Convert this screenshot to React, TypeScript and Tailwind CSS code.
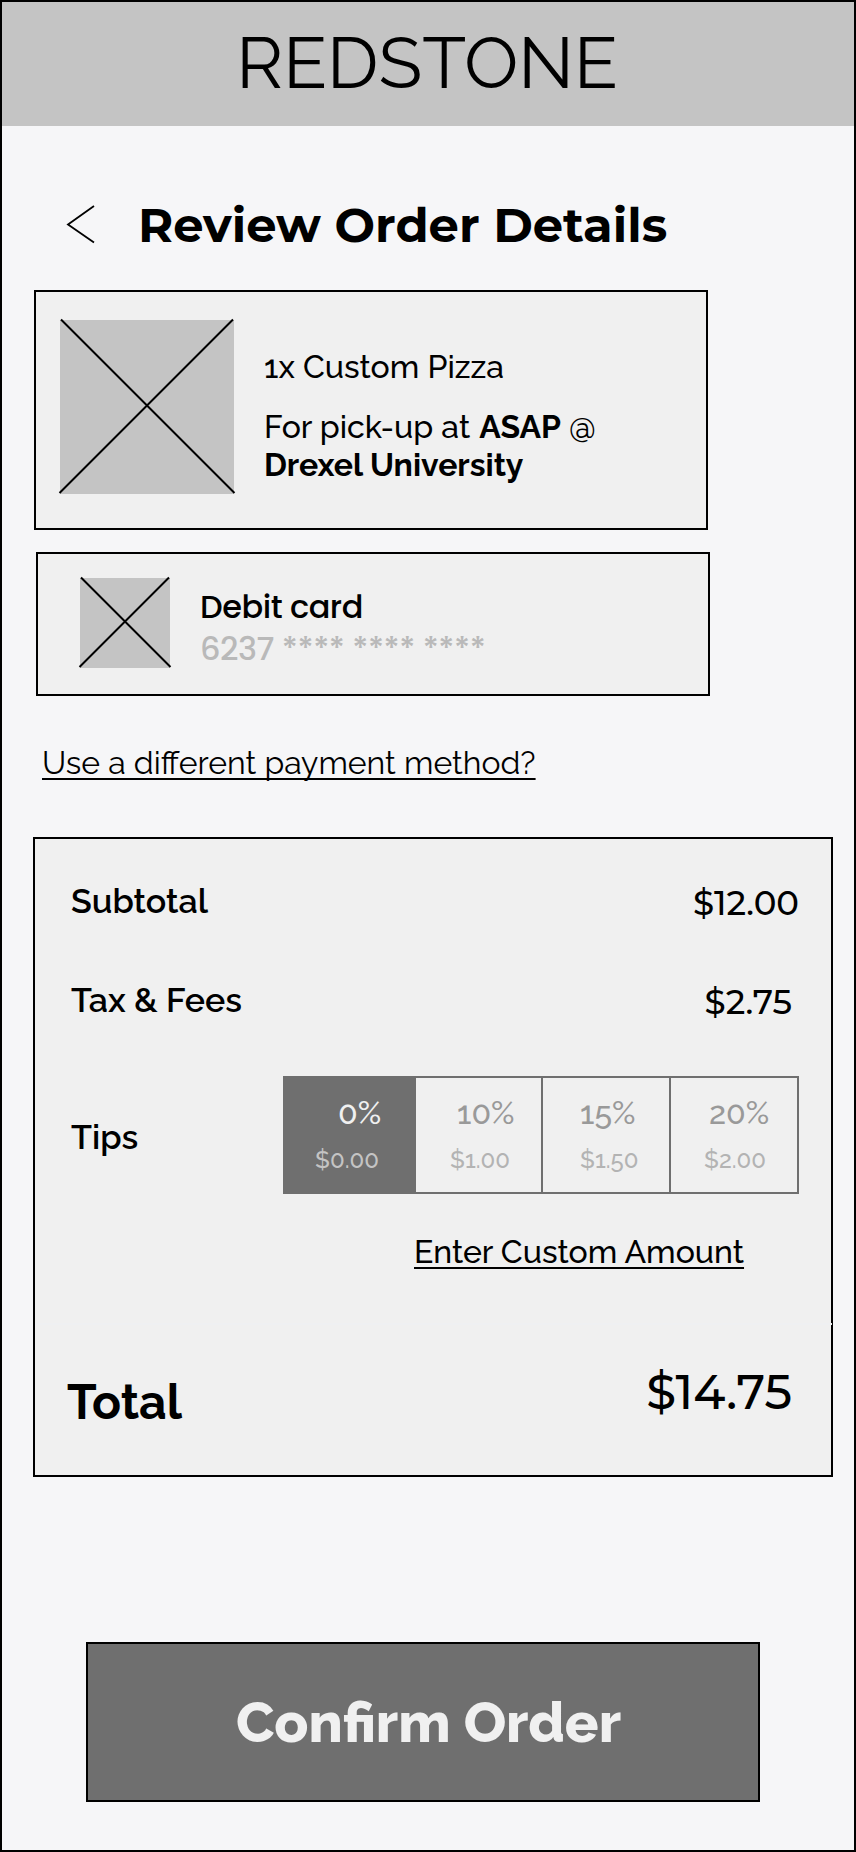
const raleway = "font-['Raleway','Lato',sans-serif]";
const montserrat = "font-['Montserrat','Open_Sans',sans-serif]";
const poppins = "font-['Poppins','Inter',sans-serif]";
const link = "self-start text-[32px] leading-[38px] underline decoration-2 underline-offset-4 [text-decoration-skip-ink:none]";

const tips = [
  { percent: "0%", amount: "$0.00", cell: "w-[131px] bg-[#6f6f6f]", top: "ml-[53px] text-[#f0f0f0]", bottom: "ml-[30px] text-[#c4c4c4]" },
  { percent: "10%", amount: "$1.00", cell: "w-[125px]", top: "ml-[41px] text-[#999999]", bottom: "ml-[34px] text-[#b3b3b3]" },
  { percent: "15%", amount: "$1.50", cell: "w-[128px] border-l-2 border-[#6f6f6f]", top: "ml-[37px] text-[#999999]", bottom: "ml-[37px] text-[#b3b3b3]" },
  { percent: "20%", amount: "$2.00", cell: "w-[128px] border-l-2 border-[#6f6f6f]", top: "ml-[38px] text-[#999999]", bottom: "ml-[33px] text-[#b3b3b3]" },
];

function Placeholder({ size }: { size: number }) {
  const far = size;
  return (
    <svg width={size} height={size} viewBox={`0 0 ${size} ${size}`} className="shrink-0 overflow-visible bg-[#c4c4c4]">
      <path d={`M1 -0.5 L${far + 0.5} ${far - 1} M${far - 1} -0.5 L-0.5 ${far - 1}`} stroke="#000" strokeWidth="2" fill="none" />
    </svg>
  );
}

export default function App() {
  return (
    <div className={`${raleway} flex h-[1852px] w-[856px] flex-col border-2 border-black bg-[#f6f6f8] text-black`}>
      <header className="h-[124px] bg-[#c4c4c4] pt-[19px] pr-0.5 text-center text-[72px] leading-[84px]">REDSTONE</header>

      <div className="mt-[70px] flex pl-16">
        <svg width="29" height="40" viewBox="0 0 29 40" className="mt-2" fill="none" stroke="#000" strokeWidth="1.8">
          <path d="M28 2 L2 20.5 L28 38.5" />
        </svg>
        <h1 className={`${montserrat} ml-[43px] text-[48px] leading-[58px] font-bold`}>Review Order Details</h1>
      </div>

      <section className="mt-9 ml-8 flex h-60 w-[674px] border-2 border-black bg-[#f0f0f0] pt-7 pl-6 text-[32px] leading-[38px] font-medium">
        <Placeholder size={174} />
        <div className="mt-7 ml-[30px]">
          <p>1x Custom Pizza</p>
          <p className="mt-[22px]">
            For pick-up at <b className="ml-px">ASAP</b> @
            <br />
            <b>Drexel University</b>
          </p>
        </div>
      </section>

      <section className="mt-[22px] ml-[34px] flex h-36 w-[674px] border-2 border-black bg-[#f0f0f0] pt-6 pl-[42px]">
        <Placeholder size={90} />
        <div className={`${poppins} mt-2 ml-[30px] text-[32px] leading-[41px] font-medium tracking-[-0.015em]`}>
          <p>Debit card</p>
          <p className="mt-px text-[#b9b9b9]">6237 **** **** ****</p>
        </div>
      </section>

      <a className={`${link} mt-12 ml-10 font-normal`}>Use a different payment method?</a>

      <section className="mt-[55px] ml-[31px] flex h-[640px] w-[800px] flex-col border-2 border-black bg-[#f0f0f0] text-[34px] leading-10 font-medium">
        <div className="mt-[42px] flex items-start justify-between pr-8 pl-9">
          <span className="font-semibold">Subtotal</span>
          <span className={`${montserrat} mt-0.5`}>$12.00</span>
        </div>
        <div className="mt-[57px] flex items-start justify-between pr-[39px] pl-9">
          <span className="font-semibold">Tax &amp; Fees</span>
          <span className={`${montserrat} mt-0.5`}>$2.75</span>
        </div>
        <div className="mt-[54px] flex items-start justify-between pr-8 pl-9">
          <span className="mt-[41px] font-semibold">Tips</span>
          <div className="flex h-[118px] border-2 border-[#6f6f6f]">
            {tips.map((tip) => (
              <div key={tip.percent} className={`flex flex-col items-start pt-4 ${tip.cell}`}>
                <span className={`text-[32px] leading-[38px] ${tip.top}`}>{tip.percent}</span>
                <span className={`mt-[14px] text-[24px] leading-7 ${tip.bottom}`}>{tip.amount}</span>
              </div>
            ))}
          </div>
        </div>
        <a className={`${link} mt-[39px] ml-[379px]`}>Enter Custom Amount</a>
        <div className="mt-[52px] -mr-px h-0.5 shrink-0 bg-[#eff0f2]" />
        <div className="mt-[37px] flex items-start justify-between pr-[39px] pl-8">
          <span className="mt-3 text-[48px] leading-[56px] font-bold">Total</span>
          <span className={`${montserrat} mt-px text-[48px] leading-[58px]`}>$14.75</span>
        </div>
      </section>

      <button className="mt-[165px] ml-[84px] h-40 w-[674px] border-2 border-black bg-[#6f6f6f] pl-[11px] text-[56px] leading-[66px] font-extrabold text-[#f0f0f0]">
        Confirm Order
      </button>
    </div>
  );
}
